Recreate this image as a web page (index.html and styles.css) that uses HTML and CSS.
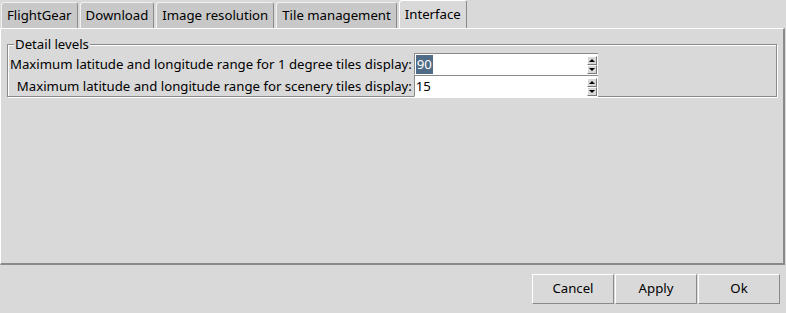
FILE: index.html
```html
<!DOCTYPE html>
<html>
<head>
<meta charset="utf-8">
<link rel="stylesheet" href="styles.css">
</head>
<body>
<div class="win">
  <div class="tabs">
    <div class="tab">FlightGear</div>
    <div class="tab">Download</div>
    <div class="tab">Image resolution</div>
    <div class="tab">Tile management</div>
    <div class="tab active">Interface</div>
  </div>
  <div class="panel">
    <div class="group">
      <span class="legend">Detail levels</span>
      <div class="rows">
        <div class="label">Maximum latitude and longitude range for 1 degree tiles display:</div>
        <div class="spin">
          <div class="field"><span class="sel">90</span></div>
          <div class="arrows">
            <div class="arr"><span class="up"></span></div>
            <div class="arr"><span class="down"></span></div>
          </div>
        </div>
        <div class="label">Maximum latitude and longitude range for scenery tiles display:</div>
        <div class="spin">
          <div class="field"><span>15</span></div>
          <div class="arrows">
            <div class="arr"><span class="up"></span></div>
            <div class="arr"><span class="down"></span></div>
          </div>
        </div>
      </div>
    </div>
  </div>
  <div class="buttons">
    <div class="btn">Cancel</div>
    <div class="btn">Apply</div>
    <div class="btn">Ok</div>
  </div>
</div>
</body>
</html>
```
FILE: styles.css
```css
html, body {
  margin: 0;
  padding: 0;
  background: #d9d9d9;
}
body {
  font-family: "Noto Sans", "DejaVu Sans", sans-serif;
  font-size: 13.2px;
  color: #000;
  width: 786px;
  height: 313px;
  overflow: hidden;
}
.tabs {
  display: flex;
  align-items: flex-end;
  height: 28px;
  gap: 2px;
  padding-left: 1px;
}
.tab {
  box-sizing: border-box;
  height: 26px;
  line-height: 24px;
  padding: 0 5px;
  white-space: nowrap;
  background: #c8c8c8;
  border-top: 1px solid #f0f0f0;
  border-left: 1px solid #f0f0f0;
  border-right: 1px solid #8a8a8a;
  border-radius: 3px 3px 0 0;
}
.tab.active {
  height: 28px;
  line-height: 27px;
  background: #d9d9d9;
  border-top-color: #fff;
  border-left-color: #fff;
}
.panel {
  box-sizing: border-box;
  height: 237px;
  width: 785px;
  border-top: 1px solid #fff;
  border-left: 1px solid #fff;
  border-right: 2px solid #8a8a8a;
  border-bottom: 2px solid #8a8a8a;
  padding: 15px 6px 0 6px;
}
.group {
  position: relative;
  box-sizing: border-box;
  height: 53px;
  border: 1px solid #8a8a8a;
  box-shadow: 1px 1px 0 #fff, inset 1px 1px 0 #fff;
  padding: 8px 0 0 2px;
}
.legend {
  position: absolute;
  top: -10px;
  left: 6px;
  padding: 0 1px;
  background: #d9d9d9;
  line-height: 18px;
}
.rows {
  display: grid;
  grid-template-columns: max-content 184px;
  row-gap: 0;
}
.label {
  text-align: right;
  white-space: nowrap;
  line-height: 22px;
  height: 22px;
  padding-right: 2px;
}
.spin {
  display: flex;
  height: 22px;
  box-sizing: border-box;
  border-top: 1px solid #8a8a8a;
  border-left: 1px solid #8a8a8a;
  border-bottom: 1px solid #fff;
  background: #fff;
}
.field {
  flex: 1;
  line-height: 19px;
  padding-left: 1px;
  padding-top: 1px;
}
.sel {
  background: #4f6b87;
  color: #fff;
  display: inline-block;
  line-height: 19px;
  padding: 0 1px;
}
.arrows {
  display: flex;
  flex-direction: column;
  justify-content: center;
  gap: 0;
  padding: 1px 0 0 0;
  width: 11px;
}
.arr {
  box-sizing: border-box;
  width: 10px;
  height: 9px;
  background: #d9d9d9;
  border-top: 1px solid #fff;
  border-left: 1px solid #fff;
  border-right: 1px solid #7a7a7a;
  border-bottom: 1px solid #7a7a7a;
  display: flex;
  align-items: center;
  justify-content: center;
}
.up {
  width: 0;
  height: 0;
  border-left: 3px solid transparent;
  border-right: 3px solid transparent;
  border-bottom: 3px solid #000;
}
.down {
  width: 0;
  height: 0;
  border-left: 3px solid transparent;
  border-right: 3px solid transparent;
  border-top: 3px solid #000;
}
.buttons {
  display: flex;
  justify-content: flex-end;
  padding: 9px 6px 0 0;
  gap: 1px;
}
.btn {
  box-sizing: border-box;
  width: 82px;
  height: 30px;
  line-height: 27px;
  text-align: center;
  background: #d9d9d9;
  border-top: 1px solid #fff;
  border-left: 1px solid #fff;
  border-right: 1px solid #8a8a8a;
  border-bottom: 1px solid #8a8a8a;
}
```
